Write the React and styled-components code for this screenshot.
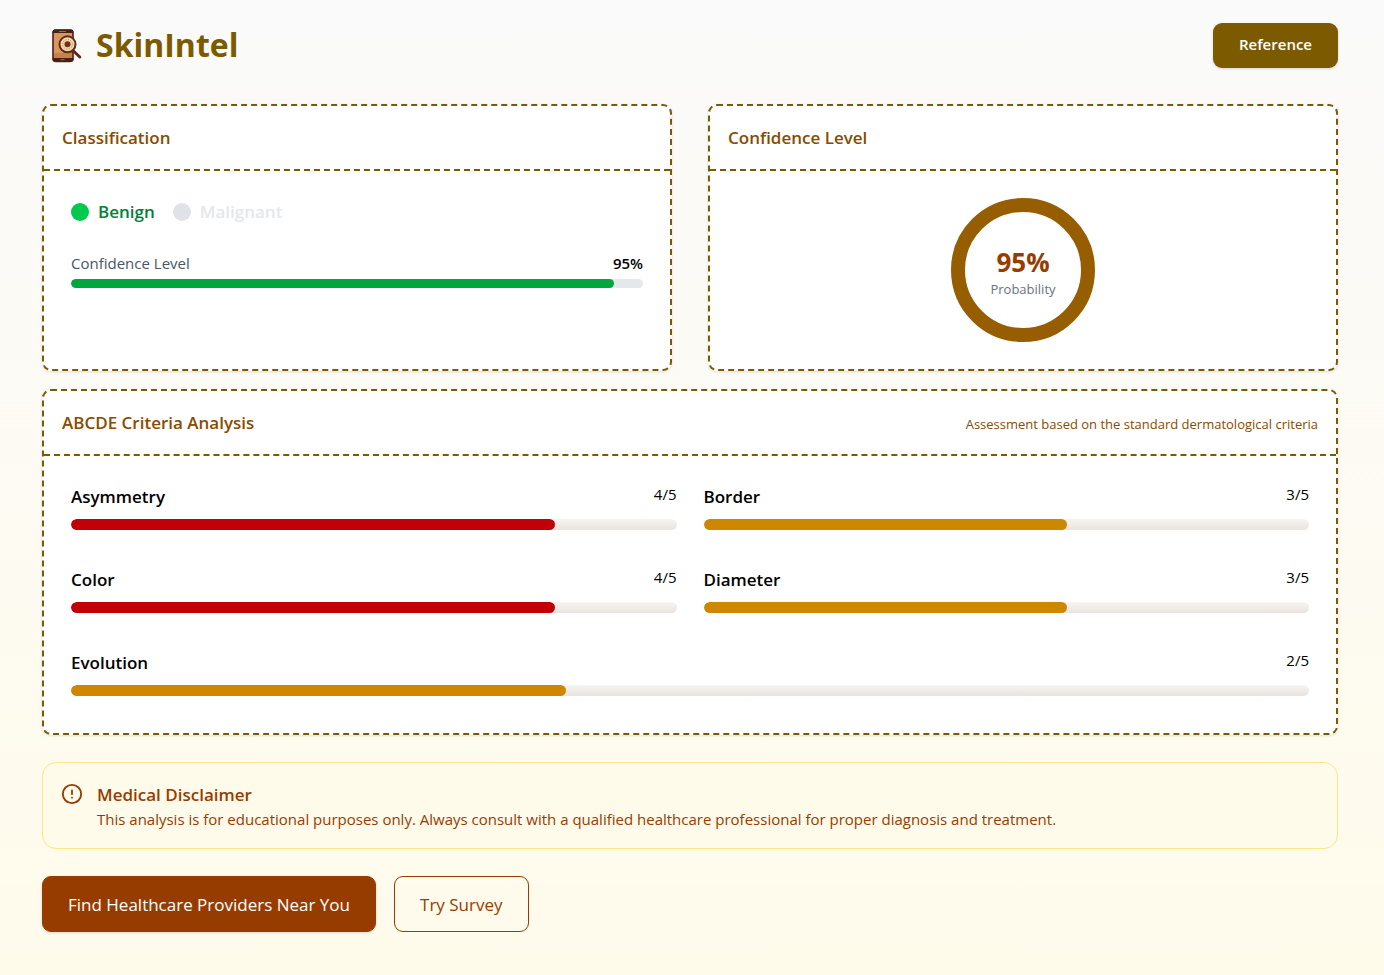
import React from 'react'
import styled, { createGlobalStyle } from 'styled-components'
import { CircleAlert } from 'lucide-react'

const GlobalStyle = createGlobalStyle`
  *, *::before, *::after {
    box-sizing: border-box;
  }

  body {
    margin: 0;
    font-family: "Open Sans", "Noto Sans", sans-serif;
    font-size: 16px;
    line-height: 24px;
    color: #000;
  }

  h1, h2, h3, p {
    margin: 0;
  }
`

const Page = styled.div`
  min-height: 100vh;
  padding: 23px 46px 43px 42px;
  background: linear-gradient(to bottom, #fafafa, #fffbeb);
`

const Container = styled.div`
  max-width: 1296px;
  margin: 0 auto;
`

const Header = styled.header`
  display: flex;
  align-items: center;
  justify-content: space-between;
  margin-bottom: 36px;
`

const Brand = styled.div`
  display: flex;
  align-items: center;
  gap: 6px;
`

const BrandName = styled.h1`
  padding-bottom: 2px;
  font-size: 32px;
  line-height: 43px;
  font-weight: 700;
  color: #7c5a00;
`

const ReferenceButton = styled.button`
  height: 45px;
  padding: 0 26px 4px;
  border: 0;
  border-radius: 9px;
  background: #7c5a00;
  color: #fff;
  font: 600 15px "Open Sans", "Noto Sans", sans-serif;
  box-shadow: 0 1px 3px rgba(0, 0, 0, 0.15);
`

const TopGrid = styled.div`
  display: grid;
  grid-template-columns: 1fr 1fr;
  gap: 36px;
  margin-bottom: 18px;
`

const Card = styled.section`
  border: 2px dashed #7c5a00;
  border-radius: 9px;
  background: #fff;
  box-shadow: 0 1px 3px rgba(0, 0, 0, 0.12);
`

const CardHeader = styled.div`
  display: flex;
  align-items: center;
  justify-content: space-between;
  padding: 18px;
  border-bottom: 2px dashed #7c5a00;
`

const CardTitle = styled.h2`
  font-size: 17px;
  line-height: 27px;
  font-weight: 600;
  color: #894b00;
`

const CardNote = styled.span`
  padding-top: 2px;
  font-size: 13px;
  color: #894b00;
`

const CardBody = styled.div`
  padding: 27px;
`

const Labels = styled.div`
  display: flex;
  gap: 18px;
  margin-bottom: 26px;
`

const Label = styled.div`
  display: flex;
  align-items: center;
  gap: 9px;
  font-size: 17px;
  line-height: 27px;
  font-weight: 600;
  color: ${props => (props.$active ? '#008236' : '#e5e7eb')};

  &::before {
    content: "";
    width: 18px;
    height: 18px;
    border-radius: 50%;
    background: ${props => (props.$active ? '#00c950' : '#dfe2e7')};
  }
`

const BarHead = styled.div`
  display: flex;
  justify-content: space-between;
  margin-bottom: 4px;
  font-size: 15px;
  color: #4a5565;

  strong {
    font-weight: 600;
    color: #000;
  }
`

const Track = styled.div`
  height: ${props => (props.$thin ? '9px' : '11px')};
  border-radius: 9px;
  overflow: hidden;
  background: ${props => (props.$thin ? '#e5e7eb' : 'linear-gradient(to bottom, #f5f5f4, #ebe3dc)')};
`

const Fill = styled.div`
  height: 100%;
  border-radius: 9px;
  background: ${props => props.$color};
`

const DonutBody = styled(CardBody)`
  display: flex;
  justify-content: center;
`

const Donut = styled.div`
  display: flex;
  flex-direction: column;
  align-items: center;
  justify-content: center;
  width: 144px;
  height: 144px;
  padding-top: 8px;
  border: 14px solid #965e00;
  border-radius: 50%;
`

const DonutValue = styled.span`
  font-size: 26px;
  line-height: 30px;
  font-weight: 700;
  color: #973c00;
`

const DonutCaption = styled.span`
  font-size: 13px;
  color: #6a7282;
`

const Criteria = styled.div`
  display: grid;
  grid-template-columns: 1fr 1fr;
  gap: 36px 27px;
  padding: 27px 27px 37px;
`

const Criterion = styled.div`
  grid-column: ${props => (props.$wide ? '1 / -1' : 'auto')};
`

const CriterionHead = styled.div`
  display: flex;
  justify-content: space-between;
  align-items: flex-start;
  margin-bottom: 9px;
`

const CriterionName = styled.h3`
  font-size: 17px;
  line-height: 27px;
  font-weight: 600;
`

const Score = styled.span`
  font-size: 15px;
  line-height: 22px;
`

const Disclaimer = styled.section`
  display: flex;
  gap: 14px;
  margin-top: 27px;
  padding: 18px;
  border: 1px solid #fee685;
  border-radius: 14px;
  background: #fffbeb;
  color: #973c00;

  svg {
    flex: none;
    margin-top: 2px;
  }
`

const DisclaimerTitle = styled.h3`
  font-size: 17px;
  line-height: 27px;
  font-weight: 600;
`

const DisclaimerText = styled.p`
  font-size: 15px;
  line-height: 22px;
`

const Actions = styled.div`
  display: flex;
  gap: 18px;
  margin-top: 27px;
`

const ActionButton = styled.button`
  height: 56px;
  padding: 0 25px;
  border: 1px solid #973c00;
  border-radius: 9px;
  background: ${props => (props.$primary ? '#973c00' : 'transparent')};
  color: ${props => (props.$primary ? '#fff' : '#973c00')};
  font: 400 17px "Open Sans", "Noto Sans", sans-serif;
  box-shadow: ${props => (props.$primary ? '0 1px 3px rgba(0, 0, 0, 0.15)' : 'none')};
`

const RED = '#c10007'
const YELLOW = '#d08700'

const criteria = [
  { name: 'Asymmetry', score: 4, color: RED },
  { name: 'Border', score: 3, color: YELLOW },
  { name: 'Color', score: 4, color: RED },
  { name: 'Diameter', score: 3, color: YELLOW },
  { name: 'Evolution', score: 2, color: YELLOW, wide: true },
]

const Logo = () => (
  <svg width="48" height="45" viewBox="0 0 48 45" fill="none" aria-hidden="true">
    <rect x="11" y="7" width="20" height="31.500" rx="3" fill="#d9975f" stroke="#4a2015" strokeWidth="1.600" />
    <path d="M12 31c4-3 6 0 9-1s5-3 9-1v6H12z" fill="#c9814a" />
    <path d="M10.500 10V9a2.500 2.500 0 0 1 2.500-2.500h16A2.500 2.500 0 0 1 31.500 9v1z" fill="#4a2015" />
    <path d="M10.500 35h21v1a2.500 2.500 0 0 1-2.500 2.500H13a2.500 2.500 0 0 1-2.500-2.500z" fill="#4a2015" />
    <path d="M17 8.500h7M18.500 36.700h4" stroke="#a5673f" />
    <path d="m31.500 28 6.300 6" stroke="#5e2b18" strokeWidth="3" strokeLinecap="round" />
    <circle cx="25.500" cy="21.300" r="8" fill="#f3d5ae" stroke="#5e2b18" strokeWidth="2" />
    <circle cx="25.500" cy="21.300" r="4.800" stroke="#b97a4c" strokeDasharray="1 1.500" />
    <circle cx="25.500" cy="21.300" r="3" fill="#6e3219" />
  </svg>
)

const Bar = ({ label, percent, color, thin }) => (
  <Track
    $thin={thin}
    role="progressbar"
    aria-label={label}
    aria-valuenow={percent}
    aria-valuemin={0}
    aria-valuemax={100}
  >
    <Fill $color={color} style={{ width: `${percent}%` }} />
  </Track>
)

const App = () => (
  <Page>
    <GlobalStyle />
    <Container>
      <Header>
        <Brand>
          <Logo />
          <BrandName>SkinIntel</BrandName>
        </Brand>
        <ReferenceButton type="button">Reference</ReferenceButton>
      </Header>

      <TopGrid>
        <Card>
          <CardHeader>
            <CardTitle>Classification</CardTitle>
          </CardHeader>
          <CardBody>
            <Labels>
              <Label $active>Benign</Label>
              <Label>Malignant</Label>
            </Labels>
            <BarHead>
              <span>Confidence Level</span>
              <strong>95%</strong>
            </BarHead>
            <Bar thin label="Confidence Level" percent={95} color="#00a63e" />
          </CardBody>
        </Card>

        <Card>
          <CardHeader>
            <CardTitle>Confidence Level</CardTitle>
          </CardHeader>
          <DonutBody>
            <Donut>
              <DonutValue>95%</DonutValue>
              <DonutCaption>Probability</DonutCaption>
            </Donut>
          </DonutBody>
        </Card>
      </TopGrid>

      <Card>
        <CardHeader>
          <CardTitle>ABCDE Criteria Analysis</CardTitle>
          <CardNote>Assessment based on the standard dermatological criteria</CardNote>
        </CardHeader>
        <Criteria>
          {criteria.map(({ name, score, color, wide }) => (
            <Criterion key={name} $wide={wide}>
              <CriterionHead>
                <CriterionName>{name}</CriterionName>
                <Score>{score}/5</Score>
              </CriterionHead>
              <Bar label={name} percent={score * 20} color={color} />
            </Criterion>
          ))}
        </Criteria>
      </Card>

      <Disclaimer>
        <CircleAlert size={22} strokeWidth={2} />
        <div>
          <DisclaimerTitle>Medical Disclaimer</DisclaimerTitle>
          <DisclaimerText>
            This analysis is for educational purposes only. Always consult with a qualified healthcare
            professional for proper diagnosis and treatment.
          </DisclaimerText>
        </div>
      </Disclaimer>

      <Actions>
        <ActionButton type="button" $primary>Find Healthcare Providers Near You</ActionButton>
        <ActionButton type="button">Try Survey</ActionButton>
      </Actions>
    </Container>
  </Page>
)

export default App
